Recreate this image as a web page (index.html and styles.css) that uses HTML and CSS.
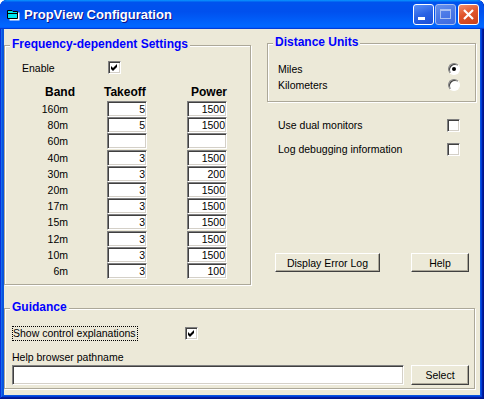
FILE: index.html
```html
<!DOCTYPE html>
<html lang="en">
<head>
    <meta charset="UTF-8">
    <title>PropView Configuration</title>
    <link rel="stylesheet" href="styles.css">
</head>
<body>
    <div class="window">
        <div class="titlebar">
            <svg class="app-icon" width="14" height="12" viewBox="0 0 14 12">
                <rect x="2.5" y="3.5" width="10" height="8" fill="#fff" />
                <path d="M0.5 1.5 H5 L6 2.5 H10.5 V9.5 H0.5 Z" fill="#00e8f0" stroke="#000" />
                <rect x="1" y="4" width="9" height="1" fill="#000" />
            </svg>
            <span class="title">PropView Configuration</span>
            <div class="title-buttons">
                <span class="tb tb-min"><span class="min-bar"></span></span>
                <span class="tb tb-max">
                    <svg width="19" height="19" viewBox="0 0 19 19">
                        <rect x="4.5" y="4.5" width="10" height="9" fill="none" stroke="#a9c0f2" />
                        <rect x="4" y="4" width="11" height="2" fill="#a9c0f2" />
                    </svg>
                </span>
                <span class="tb tb-close">
                    <svg width="19" height="19" viewBox="0 0 19 19">
                        <path d="M5 5 L14 14 M14 5 L5 14" stroke="#fff" stroke-width="2.2" />
                    </svg>
                </span>
            </div>
        </div>

        <div class="client">
            <div class="top-row">
                <!-- Frequency-dependent Settings -->
                <div class="group freq">
                    <span class="group-title">Frequency-dependent Settings</span>
                    <div class="enable-row">
                        <span class="enable-label">Enable</span>
                        <span class="check on"><svg width="7" height="7" viewBox="0 0 7 7"><path d="M0 2 L2 4 L6 0 L6 3 L2 7 L0 5 Z" fill="#000" /></svg></span>
                    </div>
                    <div class="band-grid">
                        <span class="hdr hdr-band">Band</span>
                        <span class="hdr hdr-takeoff">Takeoff</span>
                        <span class="hdr hdr-power">Power</span>

                        <span class="band">160m</span><input class="field" type="text" value="5"><input class="field" type="text" value="1500">
                        <span class="band">80m</span><input class="field" type="text" value="5"><input class="field" type="text" value="1500">
                        <span class="band">60m</span><input class="field" type="text" value=""><input class="field" type="text" value="">
                        <span class="band">40m</span><input class="field" type="text" value="3"><input class="field" type="text" value="1500">
                        <span class="band">30m</span><input class="field" type="text" value="3"><input class="field" type="text" value="200">
                        <span class="band">20m</span><input class="field" type="text" value="3"><input class="field" type="text" value="1500">
                        <span class="band">17m</span><input class="field" type="text" value="3"><input class="field" type="text" value="1500">
                        <span class="band">15m</span><input class="field" type="text" value="3"><input class="field" type="text" value="1500">
                        <span class="band">12m</span><input class="field" type="text" value="3"><input class="field" type="text" value="1500">
                        <span class="band">10m</span><input class="field" type="text" value="3"><input class="field" type="text" value="1500">
                        <span class="band">6m</span><input class="field" type="text" value="3"><input class="field" type="text" value="100">
                    </div>
                </div>

                <div class="side">
                    <!-- Distance Units -->
                    <div class="group units">
                        <span class="group-title">Distance Units</span>
                        <div class="unit-row"><span>Miles</span><span class="radio on"></span></div>
                        <div class="unit-row"><span>Kilometers</span><span class="radio"></span></div>
                    </div>

                    <div class="opt-row first"><span>Use dual monitors</span><span class="check"></span></div>
                    <div class="opt-row"><span>Log debugging information</span><span class="check"></span></div>

                    <div class="side-buttons">
                        <button class="btn btn-log">Display Error Log</button>
                        <button class="btn btn-small">Help</button>
                    </div>
                </div>
            </div>

            <!-- Guidance -->
            <div class="group guidance">
                <span class="group-title">Guidance</span>
                <div class="show-row">
                    <span class="focus-label">Show control explanations</span>
                    <span class="check on"><svg width="7" height="7" viewBox="0 0 7 7"><path d="M0 2 L2 4 L6 0 L6 3 L2 7 L0 5 Z" fill="#000" /></svg></span>
                </div>
                <div class="path-label">Help browser pathname</div>
                <div class="path-row">
                    <input class="path-input" type="text" value="">
                    <button class="btn btn-small">Select</button>
                </div>
            </div>
        </div>
    </div>
</body>
</html>
```

FILE: styles.css
```css
html, body {
    margin: 0;
    background: #ffffff;
}
body {
    font-family: "Liberation Sans", Arial, sans-serif;
    font-size: 10.5px;
    color: #000000;
}

/* Window frame */
.window {
    width: 484px;
    height: 399px;
    box-sizing: border-box;
    display: flex;
    flex-direction: column;
    background-color: #0855dd;
    border-radius: 7px 7px 0 0;
    box-shadow: inset -1px -1px #00138c, inset 1px 1px #0831d9,
                inset -2px -2px #001ea0, inset 2px 2px #166aee,
                inset -3px -3px #003bda, inset 3px 3px #0855dd;
}
.titlebar {
    height: 29px;
    flex: none;
    display: flex;
    align-items: center;
    padding: 0 5px 0 7px;
    border-radius: 7px 7px 0 0;
    background: linear-gradient(180deg, #0997ff, #0053ee 8%, #0050ee 40%, #0066ff 88%, #0066ff 93%, #005bff 95%, #003dd7 96%, #003dd7);
}
.app-icon {
    flex: none;
    margin-top: 1px;
}
.title {
    margin-left: 3px;
    color: #ffffff;
    font-size: 13px;
    font-weight: bold;
    text-shadow: 1px 1px #0f1089;
    flex: 1;
}
.title-buttons {
    display: flex;
    gap: 1px;
}
.tb {
    width: 21px;
    height: 21px;
    box-sizing: border-box;
    border: 1px solid #ffffff;
    border-radius: 3px;
    display: flex;
    align-items: center;
    justify-content: center;
    position: relative;
}
.tb-min {
    background: linear-gradient(160deg, #5a8ff7, #2a62e4 50%, #1c4fd6);
}
.min-bar {
    position: absolute;
    left: 4px;
    bottom: 4px;
    width: 7px;
    height: 3px;
    background: #ffffff;
}
.tb-max {
    background: linear-gradient(160deg, #6690ec, #4a78e6 50%, #3d6ae0);
    border-color: #a9c0f2;
}
.tb-close {
    margin-left: 1px;
    background: linear-gradient(160deg, #f08e6c, #e0552c 45%, #c8401a);
}

/* Client area */
.client {
    flex: 1;
    margin: 0 4px 4px;
    background-color: #ece9d8;
    display: flex;
    flex-direction: column;
}
.top-row {
    display: flex;
    align-items: flex-start;
}

/* Group boxes */
.group {
    position: relative;
    box-sizing: border-box;
    border: 1px solid #aca899;
    box-shadow: inset 1px 1px #ffffff, 1px 1px #ffffff;
}
.group-title {
    position: absolute;
    top: -9px;
    left: 5px;
    padding: 0 2px;
    background-color: #ece9d8;
    color: #0000ff;
    font-size: 12px;
    font-weight: bold;
    line-height: 14px;
}

/* Frequency-dependent settings */
.freq {
    width: 247px;
    height: 240px;
    margin-top: 16px;
}
.enable-row {
    display: flex;
    align-items: flex-start;
    height: 14px;
    margin-top: 15px;
    padding-left: 17px;
    line-height: 14px;
}
.enable-label {
    width: 86px;
}
.band-grid {
    display: grid;
    grid-template-columns: 63px 41px 40px;
    grid-template-rows: 16px;
    grid-auto-rows: 16.2px;
    column-gap: 39px;
    margin-top: 10px;
}
.hdr {
    font-size: 12px;
    font-weight: bold;
    line-height: 14px;
}
.hdr-band {
    justify-self: end;
    margin-right: -7px;
}
.hdr-takeoff {
    justify-self: start;
    margin-left: -3px;
}
.hdr-power {
    justify-self: end;
}
.band {
    text-align: right;
    line-height: 16px;
}
.field {
    width: 40px;
    height: 16px;
    box-sizing: border-box;
    margin: 0;
    padding: 0 1px 0 0;
    font: inherit;
    text-align: right;
    background: #ffffff;
    outline: none;
    border: 1px solid;
    border-color: #808080 #ffffff #ffffff #808080;
    box-shadow: inset 1px 1px #404040, inset -1px -1px #d4d0c8;
}

/* Checkbox and radio */
.check {
    width: 13px;
    height: 13px;
    box-sizing: border-box;
    flex: none;
    display: flex;
    align-items: center;
    justify-content: center;
    background: #ffffff;
    border: 1px solid;
    border-color: #808080 #ffffff #ffffff #808080;
    box-shadow: inset 1px 1px #404040, inset -1px -1px #d4d0c8;
}
.radio {
    width: 12px;
    height: 12px;
    box-sizing: border-box;
    border-radius: 50%;
    background: #ffffff;
    border: 1px solid;
    border-color: #808080 #ffffff #ffffff #808080;
    box-shadow: inset 1px 1px #404040;
    display: flex;
    align-items: center;
    justify-content: center;
}
.radio.on::after {
    content: "";
    width: 4px;
    height: 4px;
    border-radius: 50%;
    background: #000000;
}

/* Right column */
.side {
    width: 209px;
    margin-left: 16px;
    margin-top: 14px;
}
.units {
    height: 59px;
    padding: 17px 15px 8px 10px;
}
.unit-row {
    height: 16px;
    display: flex;
    align-items: center;
    justify-content: space-between;
}
.opt-row {
    height: 14px;
    margin-top: 10px;
    padding: 0 16px 0 11px;
    display: flex;
    align-items: center;
    justify-content: space-between;
}
.opt-row.first {
    margin-top: 16px;
}
.side-buttons {
    display: flex;
    gap: 31px;
    margin-top: 97px;
    padding-left: 8px;
}
.btn {
    height: 19px;
    box-sizing: border-box;
    margin: 0;
    padding: 0;
    font: inherit;
    color: #000000;
    background-color: #ece9d8;
    border: 1px solid;
    border-color: #ffffff #404040 #404040 #ffffff;
    box-shadow: inset -1px -1px #aca899;
}
.btn-log {
    width: 105px;
}
.btn-small {
    width: 58px;
}

/* Guidance */
.guidance {
    width: 471px;
    height: 81px;
    margin-top: 23px;
    padding: 17px 0 3px 7px;
}
.show-row {
    display: flex;
    align-items: center;
    height: 15px;
}
.focus-label {
    width: 126px;
    height: 15px;
    box-sizing: border-box;
    border: 1px dotted #000000;
    line-height: 13px;
}
.show-row .check {
    margin-left: 47px;
}
.path-label {
    margin-top: 9px;
    line-height: 14px;
}
.path-row {
    display: flex;
    gap: 7px;
    margin-top: 1px;
}
.path-input {
    width: 392px;
    height: 20px;
    box-sizing: border-box;
    margin: 0;
    padding: 0 2px;
    font: inherit;
    background: #ffffff;
    outline: none;
    border: 1px solid;
    border-color: #808080 #ffffff #ffffff #808080;
    box-shadow: inset 1px 1px #404040, inset -1px -1px #d4d0c8;
}
.path-row .btn {
    height: 20px;
}
```
